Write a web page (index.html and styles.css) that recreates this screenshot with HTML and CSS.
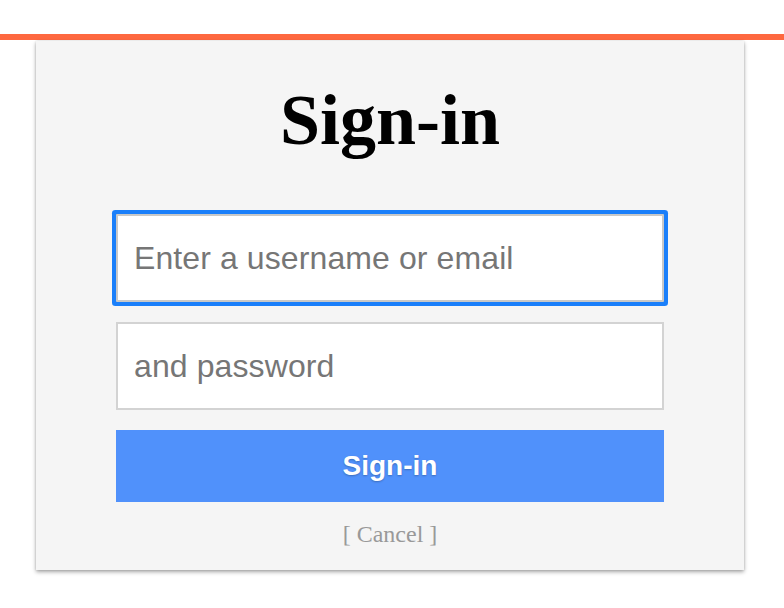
FILE: index.html
```html
<!DOCTYPE html>
<html>
<head>
<meta charset="utf-8">
<title>Sign-in</title>
<link rel="stylesheet" href="styles.css">
</head>
<body>
<div class="topbar"></div>
<form class="card">
  <h1 class="title">Sign-in</h1>
  <input class="field field-focus" type="text" placeholder="Enter a username or email">
  <input class="field" type="password" placeholder="and password">
  <button class="submit" type="button">Sign-in</button>
  <a class="cancel" href="#">[ Cancel ]</a>
</form>
</body>
</html>
```

FILE: styles.css
```css
html, body {
  margin: 0;
  padding: 0;
  background: #ffffff;
}

body {
  min-height: 608px;
  padding-top: 1px;
  box-sizing: border-box;
}

.topbar {
  margin-top: 33px;
  height: 6px;
  background: #fe6840;
}

.card {
  box-sizing: border-box;
  width: 708px;
  margin: 1px 0 0 36px;
  padding: 0 80px 22px;
  background: #f5f5f5;
  box-shadow: 0 2px 4px rgba(0, 0, 0, 0.35), 0 0 2px rgba(0, 0, 0, 0.12);
  display: flex;
  flex-direction: column;
  align-items: stretch;
}

.title {
  margin: 39px 0 54px;
  font-family: "Liberation Serif", "Times New Roman", serif;
  font-weight: bold;
  font-size: 72px;
  line-height: 80px;
  text-align: center;
  color: #000;
}

.field {
  box-sizing: border-box;
  height: 88px;
  margin: 0 0 20px;
  padding: 0 16px;
  border: 2px solid #d3d3d3;
  background: #fff;
  font-family: "Liberation Sans", Arial, sans-serif;
  font-size: 32px;
  letter-spacing: 0.1px;
  color: #333;
  outline: none;
}

.field::placeholder {
  color: #767676;
}

.field-focus {
  border-color: #c8c8c8;
  box-shadow: 0 0 0 4px #1a7ffa;
  border-radius: 1px;
}

.submit {
  height: 72px;
  margin: 0;
  border: none;
  background: #5091fb;
  color: #fff;
  font-family: "Liberation Sans", Arial, sans-serif;
  font-weight: bold;
  font-size: 28px;
  text-shadow: 0 1px 2px rgba(0, 0, 0, 0.25);
  cursor: pointer;
}

.cancel {
  margin-top: 19px;
  align-self: center;
  font-family: "Liberation Serif", "Times New Roman", serif;
  font-size: 24px;
  color: #999;
  text-decoration: none;
}
```
